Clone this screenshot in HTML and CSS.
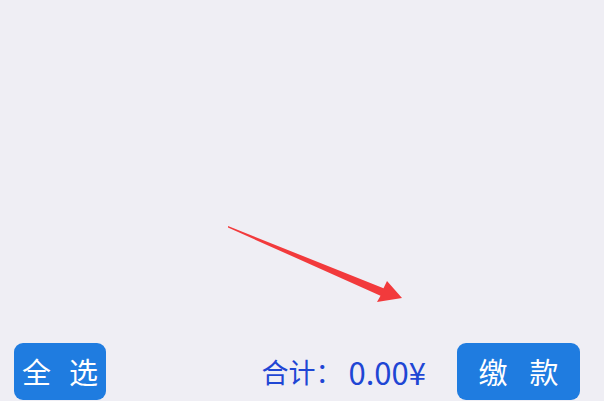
FILE: index.html
```html
<!DOCTYPE html>
<html lang="zh-CN">
<head>
<meta charset="utf-8">
<link rel="stylesheet" href="styles.css">
</head>
<body>
<div class="page">
  <div class="content">
    <svg class="arrow" width="604" height="340" viewBox="0 0 604 340">
      <polygon points="228,226 383.5,288.3 387,281 402,298 377,302 380.5,295.7 228,227.5" fill="#f23a3c"/>
    </svg>
  </div>
  <div class="bar">
    <button class="btn btn-all"><span>全</span><span>选</span></button>
    <div class="total"><span class="label">合计：</span><span class="amount">0.00¥</span></div>
    <button class="btn btn-pay"><span>缴</span><span>款</span></button>
  </div>
</div>
</body>
</html>
```
FILE: styles.css
```css
html, body {
  margin: 0;
  padding: 0;
  background: #efeef4;
  font-family: "Noto Sans CJK SC", "Noto Sans", sans-serif;
}
.page {
  width: 604px;
  height: 401px;
  display: flex;
  flex-direction: column;
  overflow: hidden;
}
.content {
  flex: 1;
  position: relative;
}
.arrow {
  position: absolute;
  left: 0;
  top: 0;
}
.bar {
  display: flex;
  align-items: center;
  padding: 0 24px 1px 14px;
  height: 57px;
  flex: none;
}
.btn {
  border: none;
  background: #1f7ce0;
  color: #ffffff;
  border-radius: 9px;
  height: 57px;
  display: flex;
  align-items: center;
  justify-content: center;
  font-family: "Noto Sans CJK SC", sans-serif;
  font-size: 29px;
  padding: 0;
  line-height: 1;
}
.btn-all {
  width: 92px;
  gap: 18px;
}
.btn-pay {
  width: 123px;
  gap: 22px;
}
.total {
  margin-left: auto;
  margin-right: 31px;
  color: #1f46d4;
  font-size: 27px;
  display: flex;
  align-items: center;
  line-height: 1;
}
.amount {
  font-size: 31px;
  margin-left: 6px;
}
```
